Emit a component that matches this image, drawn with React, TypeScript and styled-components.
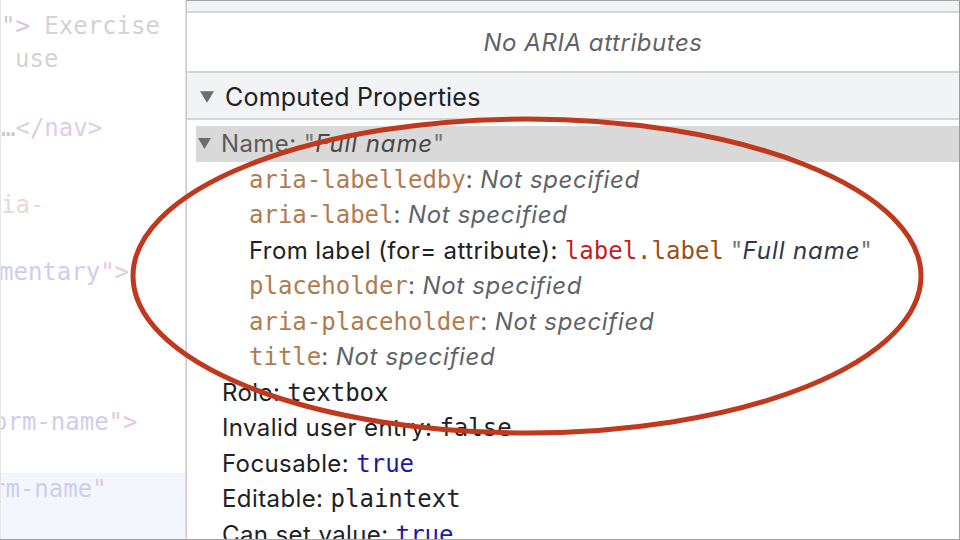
import React from "react";
import styled, { createGlobalStyle } from "styled-components";

const GlobalStyle = createGlobalStyle`
  html, body {
    margin: 0;
    padding: 0;
    background: #ffffff;
    overflow: hidden;
  }
  * { box-sizing: border-box; }
`;

const SANS = `Inter, "Liberation Sans", Arial, sans-serif`;
const MONO = `"DejaVu Sans Mono", "Liberation Mono", monospace`;

const Page = styled.div`
  position: relative;
  width: 960px;
  height: 540px;
  display: flex;
  overflow: hidden;
  border-bottom: 1px solid #a3a3a3;
  background: #ffffff;
`;

/* ---------- Elements (DOM tree) pane ---------- */
const ElementsPane = styled.div`
  width: 186px;
  flex: none;
  display: flex;
  flex-direction: column;
  border-left: 1px solid #e6e6e6;
  border-right: 1px solid #dedede;
  overflow: hidden;
`;

const CodeLine = styled.div<{ $top: number; $indent: number; $highlight?: boolean }>`
  margin-top: ${(p) => p.$top}px;
  padding-left: ${(p) => Math.max(p.$indent, 0)}px;
  margin-left: ${(p) => Math.min(p.$indent, 0)}px;
  font-family: ${MONO};
  font-size: 24px;
  line-height: 33px;
  height: 33px;
  white-space: pre;
  color: #d4d4d4;
  ${(p) =>
    p.$highlight &&
    `
    flex: 1;
    height: auto;
    background: #f3f7fd;
    margin-left: 0;
    padding-left: 0;
  `}
`;

const Tok = styled.span<{ $c: string }>`
  color: ${(p) => p.$c};
`;

const Shift = styled.span<{ $x: number }>`
  display: inline-block;
  margin-left: ${(p) => p.$x}px;
`;

/* ---------- Accessibility pane ---------- */
const AccessPane = styled.div`
  flex: 1;
  display: flex;
  flex-direction: column;
  border-left: 1px solid #cacbce;
  border-right: 1px solid #9d9d9d;
  border-top: 1px solid #a6a6a6;
  min-width: 0;
  font-family: ${SANS};
  letter-spacing: 0.4px;
`;

const TopStrip = styled.div`
  height: 12px;
  flex: none;
  background: #f1f3f4;
  border-bottom: 2px solid #d3d5d9;
`;

const EmptyNote = styled.div`
  height: 60px;
  flex: none;
  display: flex;
  align-items: center;
  justify-content: center;
  padding-left: 40px;
  padding-top: 1px;
  border-bottom: 2px solid #d3d5d9;
  font-size: 24px;
  font-style: italic;
  letter-spacing: 0.55px;
  color: #5f6368;
`;

const SectionHeader = styled.div`
  height: 47px;
  flex: none;
  display: flex;
  align-items: center;
  gap: 11px;
  padding-left: 13px;
  padding-top: 2px;
  background: #f1f3f4;
  border-bottom: 2px solid #d3d5d9;
  font-size: 25px;
  letter-spacing: 0.2px;
  color: #202124;
`;

const Tree = styled.div`
  display: flex;
  flex-direction: column;
  padding-top: 6px;
  padding-left: 9px;
  font-size: 24px;
  color: #202124;
`;

const NameRow = styled.div`
  height: 35.5px;
  display: flex;
  align-items: center;
  gap: 10px;
  padding-left: 2px;
  background: #d9d9d9;
  color: #5b5b5b;
`;

const PropRow = styled.div<{ $indent: number }>`
  height: 35.5px;
  display: flex;
  align-items: center;
  padding-left: ${(p) => p.$indent}px;
`;

const RowText = styled.span`
  white-space: pre;
`;

const AttrName = styled.span`
  font-family: ${MONO};
  letter-spacing: 0;
  color: #b07b4f;
`;

const Colon = styled.span`
  color: #5f6368;
`;

const NotSpecified = styled.span`
  font-style: italic;
  letter-spacing: 0.65px;
  color: #5f6368;
`;

const Mono = styled.span<{ $c: string }>`
  font-family: ${MONO};
  letter-spacing: 0;
  color: ${(p) => p.$c};
`;

const Quoted = styled.span<{ $c: string }>`
  font-style: italic;
  letter-spacing: 0.9px;
  color: ${(p) => p.$c};
`;

const Quote = styled.span`
  color: #777;
`;

const Triangle = ({ w, h }: { w: number; h: number }) => (
  <svg width={w} height={h} viewBox="0 0 12 10" style={{ flex: "none" }}>
    <polygon points="0,0 12,0 6,10" fill="#6d6d6d" />
  </svg>
);

const Annotation = styled.svg`
  position: absolute;
  left: 0;
  top: 0;
  pointer-events: none;
`;

const sub = (name: string) => (
  <PropRow $indent={53} key={name}>
    <RowText>
      <AttrName>{name}</AttrName>
      <Colon>: </Colon>
      <NotSpecified>Not specified</NotSpecified>
    </RowText>
  </PropRow>
);

const prop = (label: string, value: string, color: string) => (
  <PropRow $indent={26} key={label}>
    <RowText>
      {label}: <Mono $c={color}>{value}</Mono>
    </RowText>
  </PropRow>
);

export default function App() {
  return (
    <>
      <GlobalStyle />
      <Page>
        <ElementsPane>
          <CodeLine $top={10} $indent={0}>
            <Tok $c="#dcc0de">"&gt;</Tok> <Tok $c="#d3d3d3">Exercise</Tok>
          </CodeLine>
          <CodeLine $top={0} $indent={14}>
            <Tok $c="#d3d3d3">use</Tok>
          </CodeLine>
          <CodeLine $top={36} $indent={0}>
            <Tok $c="#c8c8c8">…</Tok>
            <Tok $c="#e2cbe6">&lt;/nav&gt;</Tok>
          </CodeLine>
          <CodeLine $top={44} $indent={0}>
            <Tok $c="#ead9cc">ia-</Tok>
          </CodeLine>
          <CodeLine $top={34} $indent={-2}>
            <Tok $c="#cfcdef">mentary</Tok>
            <Tok $c="#e6c6df">"&gt;</Tok>
          </CodeLine>
          <CodeLine $top={117} $indent={-8}>
            <Tok $c="#cfcdef">orm-name</Tok>
            <Tok $c="#e6c6df">"&gt;</Tok>
          </CodeLine>
          <CodeLine $top={34} $indent={0} $highlight>
            <Shift $x={-10}>
              <Tok $c="#cfcdef">rm-name</Tok>
              <Tok $c="#e6c6df">"</Tok>
            </Shift>
          </CodeLine>
        </ElementsPane>

        <AccessPane>
          <TopStrip />
          <EmptyNote>No ARIA attributes</EmptyNote>
          <SectionHeader>
            <Triangle w={14} h={12} />
            <span>Computed Properties</span>
          </SectionHeader>
          <Tree>
            <NameRow>
              <Triangle w={13} h={11} />
              <RowText>
                Name: <Quote>"</Quote>
                <Quoted $c="#4a4a4a">Full name</Quoted>
                <Quote>"</Quote>
              </RowText>
            </NameRow>
            {sub("aria-labelledby")}
            {sub("aria-label")}
            <PropRow $indent={53}>
              <RowText>
                From label (for= attribute): <Mono $c="#c41e1e">label</Mono>
                <Mono $c="#9a5016">.label</Mono> <Quote>"</Quote>
                <Quoted $c="#303942">Full name</Quoted>
                <Quote>"</Quote>
              </RowText>
            </PropRow>
            {sub("placeholder")}
            {sub("aria-placeholder")}
            {sub("title")}
            {prop("Role", "textbox", "#202124")}
            {prop("Invalid user entry", "false", "#202124")}
            {prop("Focusable", "true", "#1a1aa6")}
            {prop("Editable", "plaintext", "#202124")}
            {prop("Can set value", "true", "#1a1aa6")}
          </Tree>
        </AccessPane>

        <Annotation width={960} height={540} viewBox="0 0 960 540">
          <ellipse
            cx={527}
            cy={276}
            rx={394}
            ry={157}
            fill="none"
            stroke="#c0391f"
            strokeWidth={5}
          />
        </Annotation>
      </Page>
    </>
  );
}
